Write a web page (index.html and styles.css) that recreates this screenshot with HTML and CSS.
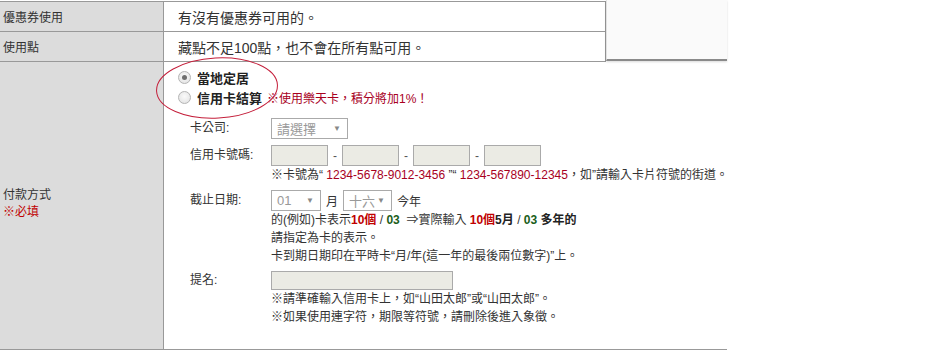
FILE: index.html
```html
<!DOCTYPE html>
<html lang="zh-Hant">
<head>
<meta charset="utf-8">
<title>付款方式</title>
<link rel="stylesheet" href="styles.css">
</head>
<body>
<div class="page">
  <div class="top">
    <div class="tbl-top">
      <div class="row">
        <div class="th">優惠券使用</div>
        <div class="td big">有沒有優惠券可用的。</div>
      </div>
      <div class="row">
        <div class="th">使用點</div>
        <div class="td big">藏點不足100點，也不會在所有點可用。</div>
      </div>
    </div>
    <div class="panel"></div>
  </div>

  <div class="pay">
    <div class="pay-th">
      <div>付款方式</div>
      <div class="req">※必填</div>
    </div>
    <div class="pay-td">
      <div class="radio-row">
        <span class="radio checked"></span>
        <span class="opt">當地定居</span>
      </div>
      <div class="radio-row">
        <span class="radio"></span>
        <span class="opt">信用卡結算</span>
        <span class="promo">※使用樂天卡，積分將加1%！</span>
      </div>

      <div class="form">
        <div class="frow">
          <div class="flabel">卡公司:</div>
          <div class="fbody">
            <div class="controls">
              <span class="select sel-company"><span>請選擇</span><span class="arrow">▼</span></span>
            </div>
          </div>
        </div>

        <div class="frow">
          <div class="flabel">信用卡號碼:</div>
          <div class="fbody">
            <div class="controls">
              <span class="field num"></span><span class="dash">-</span>
              <span class="field num"></span><span class="dash">-</span>
              <span class="field num"></span><span class="dash">-</span>
              <span class="field num"></span>
            </div>
            <div class="note">※卡號為“ <span class="ex">1234-5678-9012-3456</span> ”“ <span class="ex">1234-567890-12345</span>，如”請輸入卡片符號的街道。</div>
          </div>
        </div>

        <div class="frow">
          <div class="flabel">截止日期:</div>
          <div class="fbody">
            <div class="controls">
              <span class="select sel-month"><span>01</span><span class="arrow">▼</span></span>
              <span class="unit">月</span>
              <span class="select sel-year"><span>十六</span><span class="arrow">▼</span></span>
              <span class="unit">今年</span>
            </div>
            <div class="note">的(例如)卡表示<b class="red">10個</b> / <b class="green">03</b> &nbsp;⇒實際輸入 <b class="red">10個</b><b>5月</b> / <b class="green">03</b> <b>多年的</b></div>
            <div class="note">請指定為卡的表示。</div>
            <div class="note">卡到期日期印在平時卡“月/年(這一年的最後兩位數字)”上。</div>
          </div>
        </div>

        <div class="frow">
          <div class="flabel short">提名:</div>
          <div class="fbody">
            <div class="controls">
              <span class="field name"></span>
            </div>
            <div class="note">※請準確輸入信用卡上，如“山田太郎”或“山田太郎”。</div>
            <div class="note">※如果使用連字符，期限等符號，請刪除後進入象徵。</div>
          </div>
        </div>
      </div>
    </div>
  </div>

  <svg class="circle" width="130" height="68" viewBox="0 0 130 68">
    <ellipse cx="65" cy="34" rx="60.5" ry="30" transform="rotate(-3 65 34)" fill="none" stroke="#c41e3a" stroke-width="1"/>
  </svg>
</div>
</body>
</html>
```
FILE: styles.css
```css
html, body {
  margin: 0;
  padding: 0;
  background: #fff;
}
body {
  font-family: "Liberation Sans", "Noto Sans CJK TC", sans-serif;
  font-size: 12px;
  color: #333;
}
.page {
  width: 727px;
  padding-top: 1px;
  position: relative;
}
.top {
  display: flex;
}
.tbl-top {
  width: 606px;
  box-sizing: border-box;
  border-top: 1px solid #999;
  border-right: 1px solid #999;
}
.row {
  display: flex;
  height: 30px;
  box-sizing: border-box;
  border-bottom: 1px solid #999;
}
.th {
  width: 164px;
  flex: none;
  box-sizing: border-box;
  background: #dcdcdc;
  border-right: 1px solid #999;
  padding-left: 3px;
  display: flex;
  align-items: center;
  font-size: 12px;
}
.td {
  flex: 1;
  display: flex;
  align-items: center;
  padding-left: 14px;
}
.td.big {
  font-size: 14px;
  color: #333;
}
.panel {
  width: 121px;
  height: 61px;
  margin-top: -1px;
  box-sizing: border-box;
  background: #fafafa;
  border-left: 1px solid #e2e2e2;
  border-bottom: 2px solid #8a8a8a;
  box-shadow: 0 1px 2px rgba(0,0,0,0.15);
}

.pay {
  display: flex;
  height: 288px;
  box-sizing: border-box;
  border-bottom: 1px solid #999;
}
.pay-th {
  width: 164px;
  flex: none;
  box-sizing: border-box;
  background: #dcdcdc;
  border-right: 1px solid #999;
  padding: 0 0 4px 3px;
  display: flex;
  flex-direction: column;
  justify-content: center;
  line-height: 17px;
}
.req {
  color: #c00000;
}
.pay-td {
  flex: 1;
  padding: 5px 0 0 14px;
}
.radio-row {
  height: 20px;
  display: flex;
  align-items: center;
}
.radio {
  width: 11px;
  height: 11px;
  border: 1px solid #b4b4b4;
  border-radius: 50%;
  background: radial-gradient(circle at 50% 40%, #fafafa 0%, #e0e0e0 100%);
  margin-right: 6px;
  position: relative;
  flex: none;
}
.radio.checked::after {
  content: "";
  position: absolute;
  left: 3px;
  top: 3px;
  width: 5px;
  height: 5px;
  border-radius: 50%;
  background: #6e6e6e;
}
.opt {
  font-weight: bold;
  font-size: 13px;
  color: #222;
}
.promo {
  color: #a8001e;
  margin-left: 5px;
  font-size: 12px;
}

.form {
  margin-top: 11px;
  padding-left: 12px;
  display: flex;
  flex-direction: column;
  gap: 6px;
}
.frow {
  display: flex;
}
.flabel {
  width: 81px;
  flex: none;
  line-height: 21px;
}
.flabel.short {
  line-height: 19px;
}
.fbody {
  display: flex;
  flex-direction: column;
}
.controls {
  display: flex;
  align-items: center;
}
.select {
  height: 21px;
  box-sizing: border-box;
  border: 1px solid #aaa;
  background: #fff;
  color: #999;
  font-size: 13px;
  display: flex;
  align-items: center;
  justify-content: space-between;
  padding: 0 6px 0 5px;
}
.arrow {
  font-size: 8px;
  color: #888;
}
.sel-company { width: 77px; }
.sel-month { width: 50px; }
.sel-year { width: 49px; }
.unit {
  margin: 0 5px;
  color: #333;
}
.field {
  height: 21px;
  box-sizing: border-box;
  border: 1px solid #aaa;
  background: #ebebe4;
}
.field.num { width: 57px; }
.field.name { width: 182px; height: 19px; }
.dash {
  width: 14px;
  text-align: center;
  color: #555;
}
.note {
  line-height: 18px;
  white-space: nowrap;
}
.ex {
  color: #a8001e;
}
.red {
  color: #c00000;
}
.green {
  color: #1a5e1a;
}
b {
  color: #222;
}
.circle {
  position: absolute;
  left: 152px;
  top: 54px;
}
```
